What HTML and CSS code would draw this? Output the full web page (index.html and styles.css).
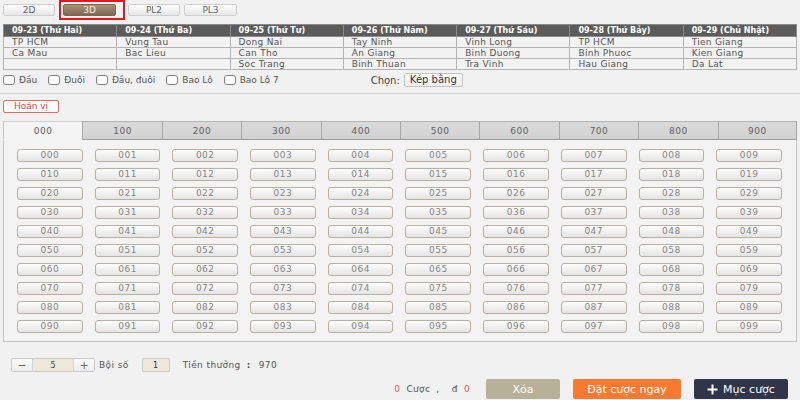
FILE: index.html
```html
<!DOCTYPE html>
<html lang="vi">
<head>
<meta charset="utf-8">
<title>3D</title>
<link rel="stylesheet" href="styles.css">
</head>
<body>
<div class="topbar">
  <button class="type-btn">2D</button>
  <span class="mark"><button class="type-btn active">3D</button></span>
  <button class="type-btn pl2">PL2</button>
  <button class="type-btn pl3">PL3</button>
</div>

<table class="sched">
  <thead>
    <tr><th>09-23 (Thứ Hai)</th><th>09-24 (Thứ Ba)</th><th>09-25 (Thứ Tư)</th><th>09-26 (Thứ Năm)</th><th>09-27 (Thứ Sáu)</th><th>09-28 (Thứ Bảy)</th><th>09-29 (Chủ Nhật)</th></tr>
  </thead>
  <tbody>
    <tr><td>TP HCM</td><td>Vung Tau</td><td>Dong Nai</td><td>Tay Ninh</td><td>Vinh Long</td><td>TP HCM</td><td>Tien Giang</td></tr>
    <tr><td>Ca Mau</td><td>Bac Lieu</td><td>Can Tho</td><td>An Giang</td><td>Binh Duong</td><td>Binh Phuoc</td><td>Kien Giang</td></tr>
    <tr><td></td><td></td><td>Soc Trang</td><td>Binh Thuan</td><td>Tra Vinh</td><td>Hau Giang</td><td>Da Lat</td></tr>
  </tbody>
</table>

<div class="opts">
  <label class="opt"><span class="cb"></span>Đầu</label>
  <label class="opt"><span class="cb"></span>Đuôi</label>
  <label class="opt"><span class="cb"></span>Đầu, đuôi</label>
  <label class="opt"><span class="cb"></span>Bao Lô</label>
  <label class="opt"><span class="cb"></span>Bao Lô 7</label>
  <div class="choose"><span>Chọn:</span><button class="kep">Kép bằng</button></div>
</div>

<hr class="sep">

<button class="hoanvi">Hoán vị</button>

<div class="panel">
  <div class="tabs">
    <div class="tab on">000</div><div class="tab">100</div><div class="tab">200</div><div class="tab">300</div><div class="tab">400</div><div class="tab">500</div><div class="tab">600</div><div class="tab">700</div><div class="tab">800</div><div class="tab">900</div>
  </div>
  <div class="nums">
    <button>000</button><button>001</button><button>002</button><button>003</button><button>004</button><button>005</button><button>006</button><button>007</button><button>008</button><button>009</button>
    <button>010</button><button>011</button><button>012</button><button>013</button><button>014</button><button>015</button><button>016</button><button>017</button><button>018</button><button>019</button>
    <button>020</button><button>021</button><button>022</button><button>023</button><button>024</button><button>025</button><button>026</button><button>027</button><button>028</button><button>029</button>
    <button>030</button><button>031</button><button>032</button><button>033</button><button>034</button><button>035</button><button>036</button><button>037</button><button>038</button><button>039</button>
    <button>040</button><button>041</button><button>042</button><button>043</button><button>044</button><button>045</button><button>046</button><button>047</button><button>048</button><button>049</button>
    <button>050</button><button>051</button><button>052</button><button>053</button><button>054</button><button>055</button><button>056</button><button>057</button><button>058</button><button>059</button>
    <button>060</button><button>061</button><button>062</button><button>063</button><button>064</button><button>065</button><button>066</button><button>067</button><button>068</button><button>069</button>
    <button>070</button><button>071</button><button>072</button><button>073</button><button>074</button><button>075</button><button>076</button><button>077</button><button>078</button><button>079</button>
    <button>080</button><button>081</button><button>082</button><button>083</button><button>084</button><button>085</button><button>086</button><button>087</button><button>088</button><button>089</button>
    <button>090</button><button>091</button><button>092</button><button>093</button><button>094</button><button>095</button><button>096</button><button>097</button><button>098</button><button>099</button>
  </div>
</div>

<div class="stake">
  <div class="stepper"><span class="st-btn">−</span><span class="st-val">5</span><span class="st-btn">+</span></div>
  <span class="lbl">Bội số</span>
  <span class="mult">1</span>
  <span class="prize">Tiền thưởng<span class="colon">:</span>970</span>
</div>

<div class="actions">
  <span class="summary"><span class="red">0</span> Cược , &nbsp;đ <span class="red">0</span></span>
  <button class="act clear">Xóa</button>
  <button class="act bet">Đặt cược ngay</button>
  <button class="act add"><svg width="11" height="11" viewBox="0 0 11 11"><path d="M5.5 0.5v10M0.5 5.5h10" stroke="#fff" stroke-width="2"/></svg>Mục cược</button>
</div>
</body>
</html>
```

FILE: styles.css
```css
* { box-sizing: border-box; }
html, body { height: 400px; overflow: hidden; }
body {
  margin: 0;
  padding: 0 3px;
  background: #f1f1f1;
  font-family: "DejaVu Sans", Verdana, sans-serif;
  font-size: 9px;
  color: #555;
}
button { font-family: inherit; cursor: pointer; }

/* top type buttons */
.topbar { display: flex; align-items: center; height: 20px; }
.type-btn {
  width: 52px; height: 12px; padding: 0;
  border: 1px solid #cfcfcf; border-radius: 2px;
  background: linear-gradient(#ffffff, #e6e6e6);
  color: #666; font-size: 9px; line-height: 10px;
}
.type-btn.active {
  width: 53px;
  border-color: #7d6653;
  background: linear-gradient(#a98f78, #806752);
  color: #f6eee6;
}
.mark {
  display: flex; margin-left: 4px;
  border: 2px solid #e3161d;
  padding: 2px 7px 2px 2px;
}
.pl2 { margin-left: 3px; }
.pl3 { margin-left: 4px; width: 53px; }

/* schedule table */
.sched {
  margin-top: 4px;
  width: 100%;
  table-layout: fixed;
  border-collapse: collapse;
  border: 1px solid #9c9c9c;
}
.sched th, .sched td {
  border: 1px solid #b3b3b3;
  padding: 0 0 0 8px;
  text-align: left;
  white-space: nowrap;
  height: 11px;
}
.sched th {
  background: #5b5b5b; color: #fff;
  font-size: 8px; font-weight: bold;
  border-color: #8a8a8a;
  line-height: 11px;
}
.sched td { font-size: 9px; line-height: 10px; color: #555; background: #f2f2f2; letter-spacing: 0.3px; }

/* options */
.opts { display: flex; align-items: center; height: 14px; margin-top: 3px; }
.opt { display: flex; align-items: center; gap: 4px; margin-right: 11px; font-size: 9px; color: #555; }
.cb {
  width: 12px; height: 10px;
  border: 1px solid #808080; border-radius: 3px;
  background: #fff;
}
.choose { display: flex; align-items: center; gap: 4px; margin-left: 81px; font-size: 10px; color: #444; }
.kep {
  height: 14px; padding: 0 5px;
  border: 1px solid #c4c4c4; border-radius: 2px;
  background: linear-gradient(#ffffff, #ececec);
  color: #333; font-size: 10px; line-height: 12px;
}

.sep { margin: 6px -3px 0; border: 0; border-top: 1px solid #cdcdcd; height: 0; }

.hoanvi {
  display: block;
  margin-top: 6px;
  width: 56px; height: 13px; padding: 0;
  border: 1px solid #dc6b6b; border-radius: 2px;
  background: #fafafa;
  color: #d9474a; font-size: 9px; line-height: 11px;
}

/* tabs panel */
.panel {
  margin-top: 8px;
  border: 1px solid #c3c3c3;
  border-top: 0;
  background: #f3f3f3;
}
.tabs { display: grid; grid-template-columns: repeat(10, 1fr); margin: 0 -1px; }
.tab {
  height: 19px;
  display: flex; align-items: center; justify-content: center;
  background: linear-gradient(#dadada, #d2d2d2);
  border-top: 1px solid #b3b3b3;
  border-bottom: 1px solid #9d9d9d;
  border-left: 1px solid #a8a8a8;
  font-size: 9px; color: #5e5e5e; letter-spacing: 0.5px;
}
.tab:last-child { border-right: 1px solid #a8a8a8; }
.tab.on {
  background: #f4f4f4;
  border-top: 1px solid #cfcfcf;
  border-left: 1px solid #c3c3c3;
  border-bottom-color: transparent;
}
.nums {
  display: grid;
  grid-template-columns: repeat(10, 1fr);
  column-gap: 12px;
  row-gap: 6px;
  padding: 9px 14px 8px 13px;
}
.nums button {
  height: 13px; padding: 0;
  border: 1px solid #b6b1a2; border-radius: 3px;
  background: linear-gradient(#fdfdfd, #e4e4e4);
  color: #858585; font-size: 9px; line-height: 11px; letter-spacing: 0.5px;
}

/* stake row */
.stake { display: flex; align-items: center; height: 14px; margin: 16px 0 0 8px; }
.stepper { display: flex; height: 14px; border: 1px solid #c9c9c9; border-radius: 2px; }
.st-btn {
  width: 20px; display: flex; align-items: center; justify-content: center;
  background: linear-gradient(#fbfbfb, #ececec);
  color: #666; font-size: 11px;
}
.st-val {
  width: 42px; display: flex; align-items: center; justify-content: center;
  background: #eee8dc; border-left: 1px solid #d4d4d4; border-right: 1px solid #d4d4d4;
  font-size: 8px; color: #444;
}
.lbl { margin-left: 4px; font-size: 9px; color: #555; letter-spacing: 0.4px; }
.mult {
  margin-left: 13px; width: 28px; height: 14px;
  display: flex; align-items: center; justify-content: center;
  background: #eee8dc; border: 1px solid #cccccc; border-radius: 1px;
  font-size: 8px; color: #333;
}
.prize { margin-left: 13px; font-size: 9px; color: #555; letter-spacing: 0.4px; }
.colon { margin: 0 8px 0 6px; font-weight: bold; }

/* actions */
.actions {
  display: flex; align-items: center; justify-content: flex-end;
  gap: 13px; margin-top: 7px; padding-right: 9px;
}
.summary { margin-right: 3px; font-size: 9px; color: #555; word-spacing: 3px; letter-spacing: 0.3px; }
.red { color: #f05a5a; }
.act {
  height: 20px; border: 0; border-radius: 2px;
  color: #fff; font-size: 11px; padding: 0;
  display: flex; align-items: center; justify-content: center; gap: 5px;
}
.clear { width: 74px; background: #b8b19a; }
.bet { width: 108px; background: #fb7a2f; }
.add { width: 94px; background: #30354a; }
```
